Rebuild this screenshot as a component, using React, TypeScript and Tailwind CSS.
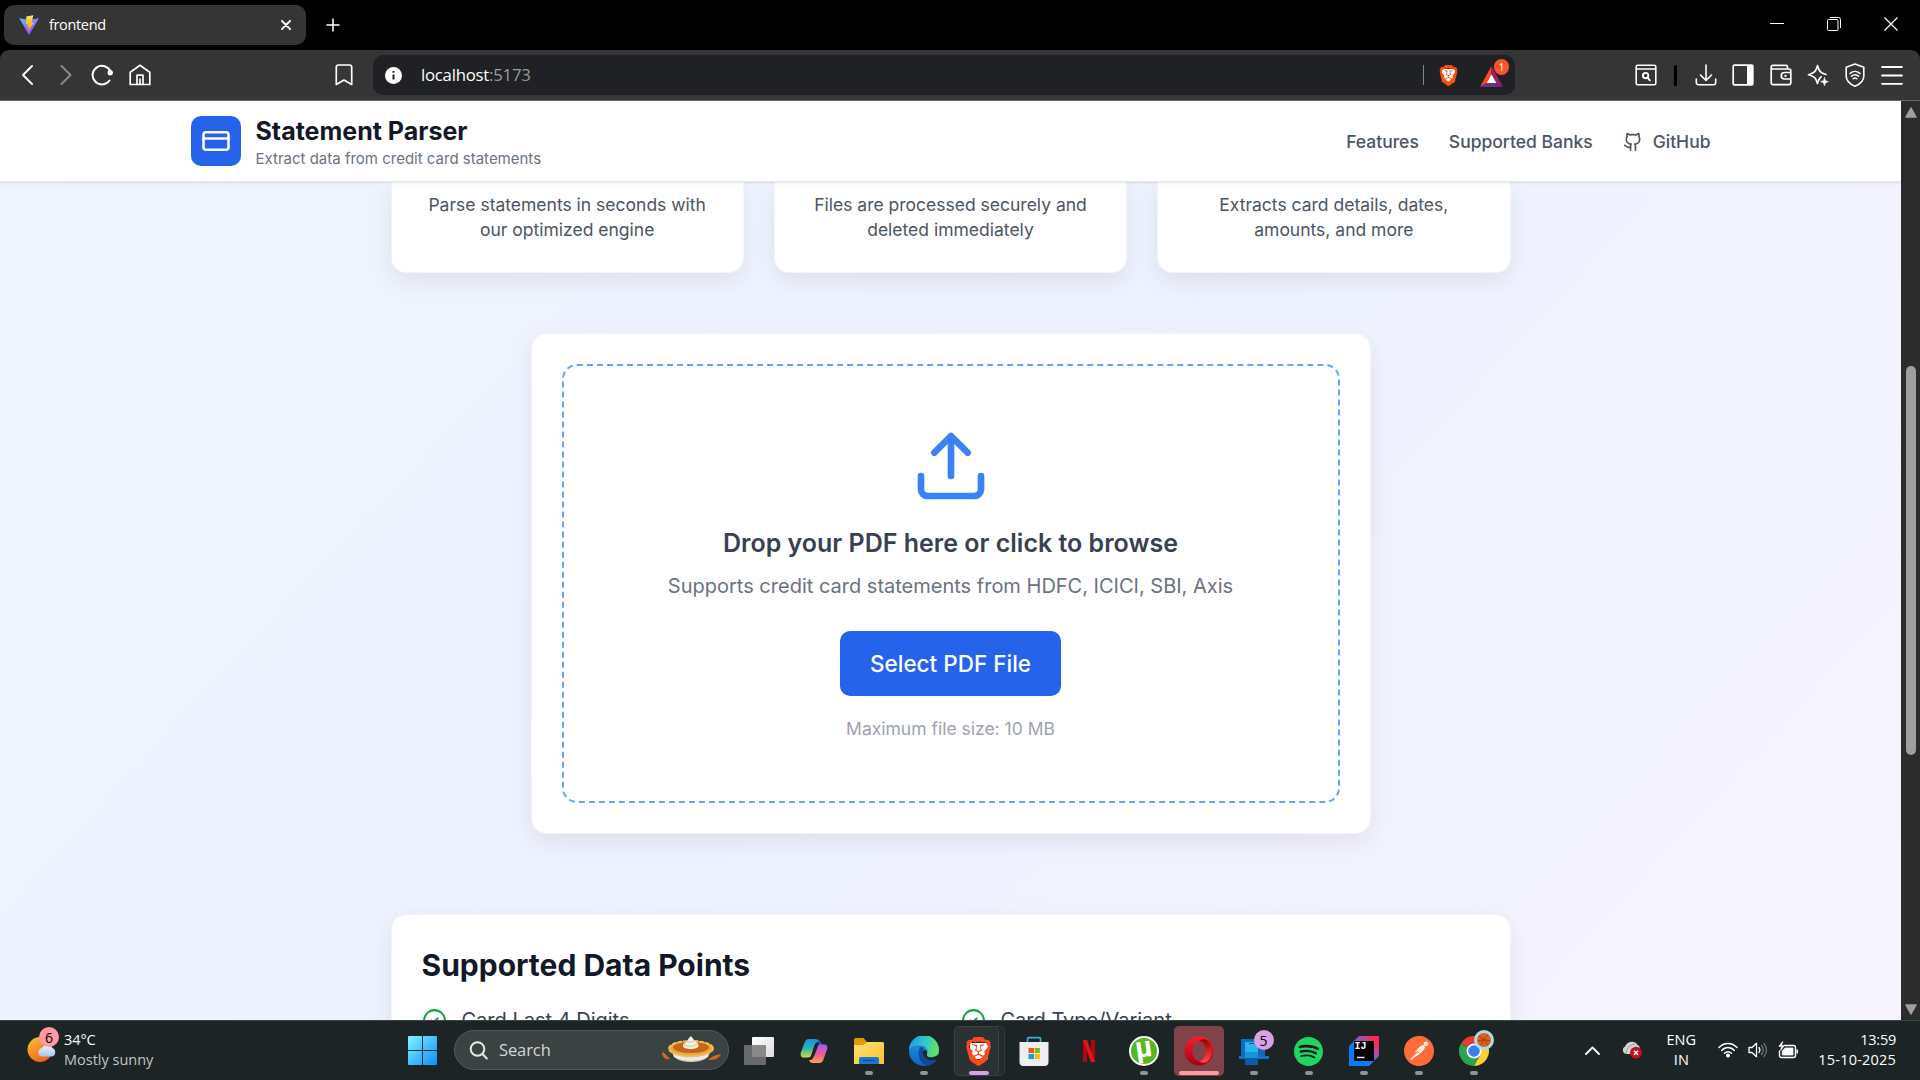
import React from "react";
import { SiBrave, SiSpotify, SiPostman } from "react-icons/si";

const UI = "font-['Open_Sans','Noto_Sans',sans-serif]";

const Svg = ({ children, className = "", vb = "0 0 24 24", sw = 2 }: { children: React.ReactNode; className?: string; vb?: string; sw?: number }) => (
  <svg viewBox={vb} className={"shrink-0 " + className} fill="none" stroke="currentColor" strokeWidth={sw} strokeLinecap="round" strokeLinejoin="round">
    {children}
  </svg>
);

function TabStrip() {
  return (
    <div className="flex h-[50px] items-start bg-black pl-1 pt-[5px] text-white">
      <div className="flex h-[40px] w-[302px] items-center rounded-[10px] bg-[#353535] pl-[15px] pr-[15px]">
        <svg viewBox="0 0 20 20" className="h-5 w-5">
          <defs>
            <linearGradient id="vp" x1="0" y1="0" x2=".6" y2="1"><stop offset="0" stopColor="#41d1ff" /><stop offset="1" stopColor="#bd34fe" /></linearGradient>
            <linearGradient id="vy" x1="0" y1="0" x2="0" y2="1"><stop offset="0" stopColor="#ffea83" /><stop offset=".3" stopColor="#ffc928" /><stop offset="1" stopColor="#ffa800" /></linearGradient>
          </defs>
          <path d="M.3 3.2 10 20 20 3.2 10 4.9z" fill="url(#vp)" />
          <path d="M14.3.3 7.3 1.6 6.8 9.3l2.2-.4-.8 3.2 1.8-.4L9 16.5l6-9-2.3.4z" fill="url(#vy)" />
        </svg>
        <span className={"ml-[10px] flex-1 text-[14.5px] tracking-[-0.35px] " + UI}>frontend</span>
        <Svg className="h-[10px] w-[10px]" vb="0 0 10 10" sw={2}><path d="m1 1 8 8M9 1 1 9" /></Svg>
      </div>
      <Svg className="ml-5 mt-[13px] h-[14px] w-[14px]" vb="0 0 14 14" sw={1.5}><path d="M7 1v12M1 7h12" /></Svg>
      <div className="ml-auto mr-[22px] mt-[12px] flex items-center gap-[43px]">
        <svg className="h-[14px] w-[14px]" viewBox="0 0 14 14" stroke="white"><path d="M0 6.5h14" /></svg>
        <svg className="h-[14px] w-[14px]" viewBox="0 0 14 14" stroke="white" fill="none"><rect x=".5" y="2.5" width="10.5" height="11" rx="1" /><path d="M3 .5h8.5a2 2 0 0 1 2 2V11" /></svg>
        <svg className="h-[14px] w-[14px]" viewBox="0 0 14 14" stroke="white" strokeWidth="1.2"><path d="m.5.5 13 13M13.500.5.500 13.500" /></svg>
      </div>
    </div>
  );
}

function Toolbar() {
  return (
    <div className="bg-black">
      <div className="flex h-[51px] items-center rounded-t-[9px] border-b border-[#656565] bg-[#353535] pl-[20px] pr-[17px] text-white">
        <Svg className="h-[22px] w-[15px]" vb="0 0 15 22" sw={2}><path d="M12 2 3 11l9 9" /></Svg>
        <Svg className="ml-[23px] h-[22px] w-[15px] text-[#8a8a8a]" vb="0 0 15 22" sw={2}><path d="m3.500 2 9 9-9 9" /></Svg>
        <Svg className="ml-[18px] h-[22px] w-[22px]" vb="0 0 22 22" sw={2}>
          <path d="M18.500 16.500a9.300 9.300 0 1 1 1-9" /><circle cx="19.200" cy="8.800" r="2.200" fill="currentColor" stroke="none" /><circle cx="19.200" cy="8.800" r="1.700" fill="currentColor" />
        </Svg>
        <Svg className="ml-[16px] h-[22px] w-[22px]" vb="0 0 22 22" sw={1.7}>
          <path d="M1.200 8.200 11 1.300l9.800 6.900v12.300H1.200zM8 20.500v-9.300h6v9.300M11 20v-5" />
        </Svg>
        <Svg className="ml-[184px] h-[22px] w-[18px]" vb="0 0 18 22" sw={1.7}><path d="M1.300 3a2 2 0 0 1 2-2h11.400a2 2 0 0 1 2 2v17.500L9 16l-7.700 4.500z" /></Svg>
        <div className="ml-[20px] flex h-[40px] w-[1142px] items-center rounded-[10px] bg-[#202124] pl-[12px]">
          <svg className="h-[17px] w-[17px]" viewBox="0 0 17 17"><circle cx="8.500" cy="8.500" r="8.500" fill="white" /><path d="M8.500 4v1.800M8.500 7.500v5" stroke="#202124" strokeWidth="2" /></svg>
          <span className={"ml-[19px] flex-1 text-[16.800px] tracking-[-0.250px] " + UI}>localhost<span className="text-[#9a9b9d]">:5173</span></span>
          <span className="h-5 w-px bg-[#85868a]" />
          <span className="relative ml-[14px] h-[25px] w-[21px]">
            <span className="absolute inset-x-[4px] inset-y-[6px] bg-white" />
            <SiBrave className="relative h-[25px] w-[21px] text-[#fb4f0a]" />
          </span>
          <span className="relative ml-[21px] mr-[6px] h-[32px] w-[29px]">
            <svg viewBox="0 0 23 22" className="absolute left-0 top-[7px] h-[22px] w-[23px]">
              <path d="M11.500 0 0 21l7-4 4.500-8z" fill="#ff4724" /><path d="M11.500 0v9l4.500 8 7 4z" fill="#9e1f63" /><path d="m0 21 7-4h9l7 4z" fill="#662d91" /><path d="m11.500 8.500 4.800 8.500H6.700z" fill="white" />
            </svg>
            <span className={"absolute left-[14px] top-0 flex h-[16px] w-[15px] items-center justify-center rounded-[8px] bg-[#fb542b] text-[10px] " + UI}>1</span>
          </span>
        </div>
        <div className="ml-auto flex items-center">
          <Svg className="h-[22px] w-[22px]" vb="0 0 22 22" sw={1.600}><rect x="1.200" y="1.200" width="19.600" height="19.600" rx="1.500" /><path d="M1.500 5h19" /><circle cx="10.600" cy="11.600" r="2.700" strokeWidth="1.900" /><path d="m12.800 13.800 2 2.500" strokeWidth="1.900" /></Svg>
          <span className="ml-[17px] h-[21px] w-[3px] rounded bg-black" />
          <Svg className="ml-[18px] h-[22px] w-[22px]" vb="0 0 22 22" sw={1.600}><path d="M11 1v15M5.500 11l5.500 5.500 5.500-5.500M1.300 15v3.500a2.200 2.200 0 0 0 2.200 2.200h15a2.200 2.200 0 0 0 2.200-2.200V15" /></Svg>
          <Svg className="ml-[15px] h-[22px] w-[22px]" vb="0 0 22 22" sw={1.700}><rect x="1.200" y="1.200" width="19.600" height="19.600" rx="1" /><path d="M15 1h6v20h-6z" fill="currentColor" stroke="none" /></Svg>
          <Svg className="ml-[16px] h-[22px] w-[22px]" vb="0 0 22 22" sw={1.700}><path d="M17.500 5V2.800a1.500 1.500 0 0 0-1.500-1.500H3a1.800 1.800 0 0 0 0 3.700h16a1.800 1.800 0 0 1 1.800 1.800v12a1.800 1.800 0 0 1-1.800 1.800H3a1.800 1.800 0 0 1-1.800-1.800V3M20.500 8.500h-6a3.200 3.200 0 0 0 0 6.500h6M15 11.800h1" /></Svg>
          <Svg className="ml-[15px] h-[25px] w-[22px]" vb="0 0 22 25" sw={1.700}><path d="M14.200 13.800C12.500 15 11.500 17 10.500 20.500c-1.500-5.500-3-7-9-8.800 6-1.800 7.500-3.400 9-9.200 1.500 5.800 3 7.400 8.500 9" /><path d="M17.500 14.500c.5 2.800 1.200 3.500 4 4.200-2.800.7-3.500 1.500-4 4.300-.5-2.800-1.200-3.600-4-4.300 2.800-.7 3.500-1.400 4-4.200z" fill="currentColor" strokeWidth=".5" /></Svg>
          <Svg className="ml-[16px] h-[25px] w-[20px]" vb="0 0 20 25" sw={1.600}><path d="m10 1 8.800 3.200v9C18.800 18.500 14 21.500 10 23.200c-4-1.700-8.800-4.700-8.800-10v-9z" /><path d="M5 10.500c3-2.700 7-2.700 10 0M6.500 13.200c2-1.800 5-1.800 7 0M8.200 15.700c1-1 2.600-1 3.600 0" /></Svg>
          <Svg className="ml-[16px] h-[20px] w-[22px]" vb="0 0 22 20" sw={1.800}><path d="M1 2h20M1 10.500h20M1 18.800h20" /></Svg>
        </div>
      </div>
    </div>
  );
}

function SiteHeader() {
  return (
    <header className="relative z-10 h-[81px] shrink-0 border-b border-[#e5e7eb] bg-white shadow-[0_1px_3px_0_rgba(0,0,0,0.1)]">
      <div className="mx-auto flex h-full w-[1600px] items-center px-10">
        <div className="flex h-[50px] w-[50px] items-center justify-center rounded-[10px] bg-[#2563eb] text-white">
          <Svg className="h-[30px] w-[30px]"><rect x="2" y="5" width="20" height="14" rx="2" /><path d="M2 10h20" /></Svg>
        </div>
        <div className="ml-[15px] mt-[4px]">
          <h1 className="text-[25px] font-bold leading-[31px] text-[#111827]">Statement Parser</h1>
          <p className="text-[15px] leading-[23px] text-[#6b7280]">Extract data from credit card statements</p>
        </div>
        <nav className="ml-auto mt-[2px] flex items-center gap-[30px] text-[17.5px] font-medium text-[#4b5563]">
          <span>Features</span>
          <span>Supported Banks</span>
          <span className="flex items-center gap-[10px]">
            <Svg className="h-5 w-5"><path d="M15 22v-4a4.800 4.800 0 0 0-1-3.500c3 0 6-2 6-5.500.08-1.250-.27-2.480-1-3.500.28-1.150.28-2.350 0-3.500 0 0-1 0-3 1.500-2.640-.5-5.360-.5-8 0C6 2 5 2 5 2c-.3 1.150-.3 2.350 0 3.500A5.403 5.403 0 0 0 4 9c0 3.500 3 5.500 6 5.500-.39.490-.68 1.050-.85 1.650-.17.600-.22 1.230-.15 1.850v4" /><path d="M9 18c-4.510 2-5-2-7-2" /></Svg>
            GitHub
          </span>
        </nav>
      </div>
    </header>
  );
}

const features = [
  ["Parse statements in seconds with", "our optimized engine"],
  ["Files are processed securely and", "deleted immediately"],
  ["Extracts card details, dates,", "amounts, and more"],
];

const cardBox = "border border-[#f3f4f6] bg-white shadow-[0_8px_25px_0_rgba(0,0,0,0.08)] ";

function Page() {
  return (
    <div className="flex h-[919px] overflow-hidden font-['Inter',sans-serif]">
      <div className="flex w-[1901px] flex-col bg-[linear-gradient(to_bottom_right,#eff6ff,#eef2ff,#faf5ff)] bg-[length:1901px_2081px] bg-[position:0_-579px]">
        <SiteHeader />
        <main className="flex flex-col items-center">
          <div className="grid w-[1120px] grid-cols-3 gap-[30px]">
            {features.map(([a, b]) => (
              <div key={a} className={"rounded-b-[15px] border-t-0 px-2 pb-[30px] pt-[10px] text-center text-[17.5px] leading-[25px] text-[#4b5563] " + cardBox}>
                <p>{a}</p>
                <p>{b}</p>
              </div>
            ))}
          </div>
          <section className={"mt-[60px] h-[501px] w-[840px] rounded-[15px] p-[30px] " + cardBox}>
            <div className="flex h-full flex-col items-center rounded-[15px] border-2 border-dashed border-[#60a5fa] pt-[60px]">
              <Svg className="h-20 w-20 text-[#3b82f6]"><path d="M21 15v4a2 2 0 0 1-2 2H5a2 2 0 0 1-2-2v-4M17 8l-5-5-5 5M12 3v12" /></Svg>
              <h3 className="mt-5 text-[25px] font-semibold leading-[35px] text-[#374151]">Drop your PDF here or click to browse</h3>
              <p className="mt-[10px] text-[20px] leading-[30px] text-[#6b7280]">Supports credit card statements from HDFC, ICICI, SBI, Axis</p>
              <button className="mt-[30px] h-[65px] rounded-[10px] bg-[#2563eb] px-[30px] text-[22.5px] font-medium text-white">Select PDF File</button>
              <p className="mt-5 text-[17.5px] leading-[25px] text-[#9ca3af]">Maximum file size: 10 MB</p>
            </div>
          </section>
          <section className={"mt-[80px] h-[300px] w-[1120px] rounded-[15px] p-[30px] " + cardBox}>
            <h2 className="text-[30px] font-bold leading-[40px] text-[#111827]">Supported Data Points</h2>
            <div className="mt-5 grid grid-cols-2 gap-5 text-[20px] leading-[30px] text-[#374151]">
              {["Card Last 4 Digits", "Card Type/Variant"].map((t) => (
                <div key={t} className="flex items-center gap-[15px]">
                  <Svg className="h-[25px] w-[25px] text-[#16a34a]"><circle cx="12" cy="12" r="10" /><path d="m9 12 2 2 4-4" /></Svg>
                  <span>{t}</span>
                </div>
              ))}
            </div>
          </section>
        </main>
      </div>
      <div className="flex w-[19px] flex-col items-center bg-[#2c2c2c] pl-px">
        <svg className="mt-[6px] h-[11px] w-[12px]" viewBox="0 0 12 11"><path d="M6 1 11 10H1z" fill="#9f9f9f" stroke="#9f9f9f" strokeWidth="1.500" strokeLinejoin="round" /></svg>
        <div className="mt-[248px] h-[389px] w-[10px] rounded-full bg-[#9f9f9f]" />
        <svg className="mb-[5px] mt-auto h-[11px] w-[12px]" viewBox="0 0 12 11"><path d="M6 10 11 1H1z" fill="#9f9f9f" stroke="#9f9f9f" strokeWidth="1.500" strokeLinejoin="round" /></svg>
      </div>
    </div>
  );
}

function TaskItem({ children, bar = "bg-[#8f9494] w-2" }: { children?: React.ReactNode; bar?: string }) {
  return (
    <div className="flex h-[50px] w-[55px] flex-col items-center">
      <div className="relative mt-[10px] flex h-[30px] w-[30px] items-center justify-center">{children}</div>
      <span className={"relative mt-[5px] h-1 rounded-full " + bar} />
    </div>
  );
}

const NOBAR = "w-0";

function Taskbar() {
  return (
    <footer className={"flex h-[60px] items-start border-t border-[#3c4444] bg-[#1d2425] pt-[4px] text-white " + UI}>
      <div className="flex w-[396px] pl-[27px]">
        <div className="relative mt-[3px] h-[40px] w-[33px]">
          <svg viewBox="0 0 33 40" className="h-[40px] w-[33px]">
            <defs>
              <linearGradient id="sun" x1="0" y1="0" x2=".5" y2="1"><stop offset="0" stopColor="#f7c531" /><stop offset="1" stopColor="#f0661a" /></linearGradient>
              <linearGradient id="cl" x1="0" y1="0" x2="0" y2="1"><stop offset="0" stopColor="#eaf2fd" /><stop offset="1" stopColor="#a8c4ee" /></linearGradient>
            </defs>
            <circle cx="13" cy="21.500" r="12.500" fill="url(#sun)" />
            <path d="M14 28.500a4.500 4.500 0 0 1 1-8.500 6 6 0 0 1 10 0 4.400 4.400 0 0 1 0 8.500z" fill="url(#cl)" />
          </svg>
          <span className="absolute left-[12px] top-[-1px] flex h-5 w-5 items-center justify-center rounded-full bg-[#ff99a4] text-[14px] text-black">6</span>
        </div>
        <div className="ml-[4px] mt-[5px] text-[14.500px] leading-[20px]">
          <div className="tracking-[-0.100px]">34°C</div>
          <div className="text-[#c3c6c6]">Mostly sunny</div>
        </div>
      </div>
      <svg viewBox="0 0 29 29" className="ml-[12px] mt-[11px] h-[29px] w-[29px]">
        <defs><linearGradient id="win" x1="0" y1="0" x2="29" y2="29" gradientUnits="userSpaceOnUse"><stop offset="0" stopColor="#82f4ff" /><stop offset="1" stopColor="#0a8cf7" /></linearGradient></defs>
        <path d="M1 0h13v14H0V1a1 1 0 0 1 1-1zM15 0h13a1 1 0 0 1 1 1v13H15zM0 15h14v14H1a1 1 0 0 1-1-1zM15 15h14v13a1 1 0 0 1-1 1H15z" fill="url(#win)" />
      </svg>
      <div className="ml-[17px] mt-[5px] flex h-10 w-[275px] items-center rounded-full border border-[#525959] bg-[#3b4242] pl-[14px] pr-[6px]">
        <Svg className="h-[19px] w-[19px] text-[#e6e8e8]" vb="0 0 19 19" sw={2}><circle cx="8.500" cy="8" r="6.800" /><path d="m13.500 13 4.300 4.500" /></Svg>
        <span className="ml-[11px] mt-px flex-1 text-[16.500px] tracking-[-0.100px] text-[#d4d6d6]">Search</span>
        <svg viewBox="0 0 60 28" className="h-[28px] w-[60px]">
          <path d="M9 15h40l-6 8c-6 4-22 4-28 0z" fill="#cfcac0" />
          <path d="M10 16c7 7 31 7 38 0l-2 5c-8 5-26 5-34 0z" fill="#eeeae0" />
          <ellipse cx="29" cy="12.500" rx="22" ry="7.500" fill="#eaa93c" />
          <ellipse cx="29" cy="12.500" rx="22" ry="7.500" fill="none" stroke="#f3bc55" strokeWidth="2" strokeLinecap="round" strokeDasharray="3 2.500" />
          <ellipse cx="29" cy="11.500" rx="18" ry="5.500" fill="#c9641a" />
          <path d="M21 10c0-3 3-3 4-5s2-3 4-5c1 2 3 3 3.500 5 2 1 4 2 4 5 0 4-15.500 4-15.500 0z" fill="#f7efdf" />
          <path d="M22 9c4 2 9 2 13-1M25 5.500c3 1 5 1 7-1" stroke="#d8c5a3" fill="none" />
          <path d="M0 16c3 1 5 4 8 7-4 1-8-1-8-7z" fill="#d7661e" /><path d="M46 24c4-4 8-5 13-6-2 5-7 6-13 6z" fill="#d7661e" />
        </svg>
      </div>
      <div className="ml-[2px] mt-[1px] flex">
        <TaskItem bar={NOBAR}>
          <svg viewBox="0 0 30 30" className="h-[30px] w-[30px]"><defs><linearGradient id="tv" x1="0" y1="0" x2="1" y2="1"><stop offset="0" stopColor="#fff" /><stop offset="1" stopColor="#dcdcdc" /></linearGradient></defs><rect x="8" y="1" width="22" height="20" rx="1" fill="url(#tv)" /><rect x="0" y="9" width="22" height="20" rx="1" fill="#777" fillOpacity=".85" /></svg>
        </TaskItem>
        <TaskItem bar={NOBAR}>
          <svg viewBox="0 0 30 30" className="h-[30px] w-[30px]">
            <defs>
              <linearGradient id="c1" x1="0" y1="0" x2="0" y2="1"><stop offset="0" stopColor="#1c8de8" /><stop offset=".5" stopColor="#28b8b0" /><stop offset="1" stopColor="#d6d83a" /></linearGradient>
              <linearGradient id="c2" x1="0" y1="0" x2="0" y2="1"><stop offset="0" stopColor="#a25cf0" /><stop offset=".5" stopColor="#e55a9b" /><stop offset="1" stopColor="#ffa04e" /></linearGradient>
            </defs>
            <path d="M20 6c-.7-2-1.500-3-4-3H10C7 3 6 5 5 8L2 16c-1 3.500 0 5.500 3 5.500h4c2 0 3-1 4-4l2.500-8c.8-3 2-3.500 4.500-3.500z" fill="url(#c1)" />
            <path d="M16 3c2 0 3 1 3.600 3l.8 3h4c-3-1-2-6-8.400-6z" fill="#1f57d6" />
            <path d="M10 24c.7 2 1.500 3 4 3h6c3 0 4-2 5-5l3-8c1-3.500 0-5.500-3-5.500h-4c-2 0-3 1-4 4l-2.500 8c-.8 3-2 3.500-4.500 3.500z" fill="url(#c2)" />
            <path d="M15.500 9.500h3.800L15 20.500h-3.200z" fill="#1d2425" />
          </svg>
        </TaskItem>
        <TaskItem>
          <svg viewBox="0 0 30 30" className="h-[30px] w-[30px]"><defs><linearGradient id="fo" x1="0" y1="0" x2="1" y2="1"><stop offset="0" stopColor="#ffdf73" /><stop offset="1" stopColor="#fcc12d" /></linearGradient></defs><path d="M0 4c0-1 .5-2 1.500-2h8l3 3.500V10H0z" fill="#dc9a05" /><path d="M0 9h9l4-3h16l1 1v21H0z" fill="url(#fo)" /><path d="M5 28v-5q0-2 2-2h16q2 0 2 2v5z" fill="#1878d0" /><path d="M9 24.500h12" stroke="#0b4f94" strokeWidth="1.300" /></svg>
        </TaskItem>
        <TaskItem>
          <svg viewBox="0 0 30 30" className="h-[30px] w-[30px]">
            <defs>
              <linearGradient id="e1" x1="0" y1=".3" x2="1" y2=".5"><stop offset="0" stopColor="#1b9de2" /><stop offset=".5" stopColor="#30c6d0" /><stop offset="1" stopColor="#68e05c" /></linearGradient>
              <linearGradient id="e2" x1="0" y1="0" x2="0" y2="1"><stop offset="0" stopColor="#1b9de2" /><stop offset="1" stopColor="#0f63bd" /></linearGradient>
            </defs>
            <circle cx="15" cy="15" r="15" fill="url(#e2)" />
            <path d="M0 14A15 15 0 0 1 30 14c0 5-4 7-8 7-3 0-5-1-4.500-2.500 3-4-1-9-6-9C6 9 1 11 0 14z" fill="url(#e1)" />
            <path d="M11 11.500c-3 6-1 17 8 18 4-.8 7-3 9-6-8 3-15-1-14-7 0-2 1-4-.5-5.500z" fill="#124a95" />
            <path d="M18 18c-1 2 1 3.500 4 3.500 3.500 0 6-1.500 8-3.500l-2 6.500C21 26 13 22 14 16c.3-1.800 2-2.600 3-1.500s1.400 2.200 1 3.500z" fill="#1d2425" />
            <path d="M14 16.500c-.5 6 6 10 14 7-2 3-5 5-9 6-6-1-8-9-5-13z" fill="#124a95" />
          </svg>
        </TaskItem>
        <div className="relative">
          <span className="absolute left-[3px] h-[50px] w-[51px] rounded-[5px] border border-[#343c3d] bg-[#242b2c]" />
          <span className="absolute left-[3px] h-[50px] w-[45px] rounded-[5px] border border-[#3a4243] bg-[#2a3233]" />
          <TaskItem bar="w-5 bg-[#d9a0e4]"><span className="absolute inset-x-[6px] inset-y-[7px] bg-white" /><SiBrave className="relative h-[31px] w-[29px] text-[#fb4a1e]" /></TaskItem>
        </div>
        <TaskItem bar={NOBAR}>
          <svg viewBox="0 0 30 30" className="h-[30px] w-[30px]"><path d="M8.500 7V3q0-1.300 1.300-1.300h10.400Q21.500 1.700 21.500 3v4" stroke="#2bb4ee" strokeWidth="1.700" fill="none" /><path d="M.5 6h29v20q0 4-4 4h-21q-4 0-4-4z" fill="#eeeeee" /><path d="M9.500 12H15v5H9.500z" fill="#f25022" /><path d="M15.800 12h5v5h-5z" fill="#7fba00" /><path d="M9.500 18H15v5H9.500z" fill="#00a4ef" /><path d="M15.800 18h5v5h-5z" fill="#ffb900" /></svg>
        </TaskItem>
        <TaskItem bar={NOBAR}>
          <svg viewBox="0 0 12 22" className="h-[22px] w-[12px]"><path d="M0 0h4v22H0zM8 0h4v22H8z" fill="#b1060f" /><path d="M0 0h4l8 22H8z" fill="#ea1019" /></svg>
        </TaskItem>
        <TaskItem>
          <span className="flex h-[30px] w-[30px] items-center justify-center overflow-hidden rounded-full border-2 border-white bg-[#56b81f]">
            <span className="-mt-[7px] rotate-[-8deg] font-['Liberation_Sans',sans-serif] text-[29px] font-bold leading-none">µ</span>
          </span>
        </TaskItem>
        <div className="relative">
          <span className="absolute left-[3px] h-[50px] w-[50px] rounded-[5px] bg-[#80434a]" />
          <TaskItem bar="w-10 bg-[#ff99a4]">
            <svg viewBox="0 0 30 30" className="relative h-[30px] w-[30px]"><defs><linearGradient id="op" x1="0" y1="0" x2="0" y2="1"><stop offset="0" stopColor="#ff1b2d" /><stop offset="1" stopColor="#a70014" /></linearGradient><linearGradient id="op2" x1="0" y1="0" x2="0" y2="1"><stop offset="0" stopColor="#9c0000" /><stop offset="1" stopColor="#ff4b4b" /></linearGradient></defs><path fillRule="evenodd" d="M15 .5a14.500 14.500 0 1 0 0 29 14.500 14.500 0 0 0 0-29zM15 5c4 0 6.500 5 6.500 10S19 25 15 25s-6.500-5-6.500-10S11 5 15 5z" fill="url(#op)" /><path d="M15 5c2-2 5-2 8-1a14.500 14.500 0 0 1 0 22c-3 1-6 1-8-1 4 0 6.500-5 6.500-10S19 5 15 5z" fill="url(#op2)" /></svg>
          </TaskItem>
        </div>
        <TaskItem>
          <svg viewBox="0 0 30 30" className="h-[30px] w-[30px]"><path d="M2 3h24v19H2z" fill="#0f6cbd" /><path d="M0 20h30v3H0z" fill="#1273c4" /><path d="M6 6h13v23H6z" fill="#2bb3ec" /><path d="M6 16h13v6H6z" fill="#1c90d8" /><path d="M6 22h13v7H6z" fill="#0c5ca8" /><path d="M10 7.500h5" stroke="#0b5394" /></svg>
          <span className="absolute left-[15px] top-[-6px] flex h-5 w-5 items-center justify-center rounded-full bg-[#d9a0e4] text-[14px] text-black">5</span>
        </TaskItem>
        <TaskItem><span className="absolute inset-[3px] rounded-full bg-[#151a1a]" /><SiSpotify className="relative h-[29px] w-[29px] text-[#1ed760]" /></TaskItem>
        <TaskItem>
          <svg viewBox="0 0 30 30" className="absolute h-[30px] w-[30px]"><defs><linearGradient id="ij" x1="0" y1="1" x2="1" y2="0"><stop offset=".35" stopColor="#087cfa" /><stop offset=".6" stopColor="#8a5cc8" /><stop offset=".85" stopColor="#fe2857" /></linearGradient></defs><path d="M10 0h20v20L20 30H0V10z" fill="url(#ij)" /><path d="M5 5h20v20H5z" fill="#000" /><path d="M8 21.500h7.500" stroke="#fff" strokeWidth="1.500" /></svg>
          <span className="relative mb-[8px] mr-[6px] font-['Liberation_Mono',monospace] text-[10px] font-bold leading-none">IJ</span>
        </TaskItem>
        <TaskItem><span className="absolute inset-[2px] rounded-full bg-white" /><SiPostman className="relative h-[30px] w-[30px] text-[#ff6c37]" /></TaskItem>
        <TaskItem>
          <svg viewBox="0 0 30 30" className="h-[30px] w-[30px]"><path d="M15 15 2 7.500A15 15 0 0 1 28 7.500z" fill="#e33b2e" /><path d="M15 15 2 7.500A15 15 0 0 0 15 30l6.500-11z" fill="#2ba24c" /><path d="M15 8h13.300A15 15 0 0 1 15 30l6.500-11.300z" fill="#fdd032" /><circle cx="15" cy="15" r="7.500" fill="#fff" /><circle cx="15" cy="15" r="5.800" fill="#3b7de9" /></svg>
          <span className="absolute left-[15px] top-[-6px] h-5 w-5 rounded-full border-[3px] border-[#a9dce4] bg-[#e0601f]" />
          <svg viewBox="0 0 14 14" className="absolute left-[18px] top-[-3px] h-[14px] w-[14px]" fill="none" stroke="#8c3414" strokeWidth=".8"><path d="M2 3q5 3 9 9M11 2Q6 5 4 12M1 8q6-3 12 0" /></svg>
        </TaskItem>
      </div>
      <div className="ml-auto flex h-[50px] items-center pr-[24px]">
        <Svg className="h-[9px] w-[15px]" vb="0 0 15 9" sw={1.800}><path d="m1 8 6.500-6.500L14 8" /></Svg>
        <svg viewBox="0 0 20 18" className="ml-[22px] h-[18px] w-[20px]"><path d="M4 13a4 4 0 0 1-1-7.500C5 0 13-1 15.500 4c2 .5 2.500 3 2 5v4z" fill="#d4d4d4" /><path d="M4 13c0-5 3-9 9-10" stroke="#999" fill="none" /><circle cx="14" cy="11.800" r="6" fill="#c50f1f" /><path d="m12 9.800 4 4m0-4-4 4" stroke="#fff" strokeWidth="1.500" /></svg>
        <div className="ml-[24px] w-[30px] text-center text-[14.500px] leading-[20px]"><div>ENG</div><div>IN</div></div>
        <Svg className="ml-[22px] h-[16px] w-[20px]" vb="0 0 20 16" sw={1.500}><path d="M1 5.500c5-5.500 13-5.500 18 0M3.700 8.500c3.500-4 9-4 12.600 0M6.500 11.300c2-2 5-2 7 0" /><circle cx="10" cy="13.500" r="1.300" fill="currentColor" /></Svg>
        <Svg className="ml-[10px] h-[16px] w-[20px]" vb="0 0 20 16" sw={1.300}><path d="M1 5.500h3L8.500 1.300v13.400L4 10.500H1z" /><path d="M11 5.500q1.800 2.500 0 5" /><path d="M13.500 3.500q3.500 4.500 0 9M16 1.500q5 6.500 0 13" stroke="#6e7474" /></Svg>
        <Svg className="ml-[10px] h-[18px] w-[20px]" vb="0 0 20 18" sw={1.400}><path d="M6.500 4.500h9a2 2 0 0 1 2 2v8a2 2 0 0 1-2 2h-12a2 2 0 0 1-2-2V10M19.200 9v3" /><path d="M7.500 7h7.500v7H4.300v-4z" fill="currentColor" strokeWidth=".8" /><path d="M4.500.6.800 5.500h2.700L2.500 9.500 6.500 4.500H4z" fill="currentColor" strokeWidth=".6" /></Svg>
        <div className="ml-[20px] text-right text-[14.500px] leading-[20px]"><div className="tracking-[-0.250px]">13:59</div><div className="tracking-[0.200px]">15-10-2025</div></div>
      </div>
    </footer>
  );
}

export default function App() {
  return (
    <div className="h-[1080px] w-[1920px] overflow-hidden bg-black">
      <TabStrip />
      <Toolbar />
      <Page />
      <Taskbar />
    </div>
  );
}
